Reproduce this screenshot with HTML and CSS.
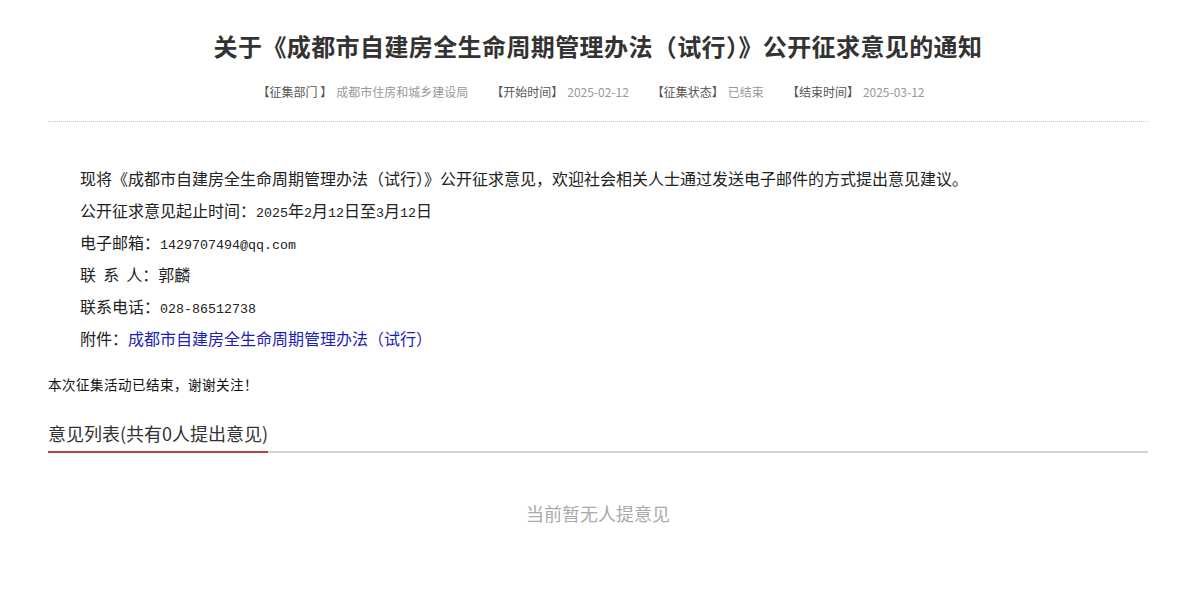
FILE: index.html
```html
<!DOCTYPE html>
<html lang="zh-CN">
<head>
	<meta charset="UTF-8">
	<title>意见征集</title>
	<link rel="stylesheet" href="styles.css">
</head>
<body>
	<div class="page">
		<h1 class="title">关于《成都市自建房全生命周期管理办法（试行）》公开征求意见的通知</h1>
		<div class="meta">
			<span class="item"><b>【征集部门 】</b>成都市住房和城乡建设局</span>
			<span class="item"><b>【开始时间】</b>2025-02-12</span>
			<span class="item"><b>【征集状态】</b>已结束</span>
			<span class="item"><b>【结束时间】</b>2025-03-12</span>
		</div>
		<div class="content">
			<p>现将《成都市自建房全生命周期管理办法（试行）》公开征求意见，欢迎社会相关人士通过发送电子邮件的方式提出意见建议。</p>
			<p>公开征求意见起止时间：<span class="en">2025</span>年<span class="en">2</span>月<span class="en">12</span>日至<span class="en">3</span>月<span class="en">12</span>日</p>
			<p>电子邮箱：<span class="en">1429707494@qq.com</span></p>
			<p>联&nbsp;&nbsp;系&nbsp;&nbsp;人：郭麟</p>
			<p>联系电话：<span class="en">028-86512738</span></p>
			<p>附件：<a href="#">成都市自建房全生命周期管理办法（试行）</a></p>
		</div>
		<div class="notice">本次征集活动已结束，谢谢关注！</div>
		<div class="tabs">
			<span class="tab">意见列表(共有0人提出意见)</span>
		</div>
		<div class="empty">当前暂无人提意见</div>
	</div>
</body>
</html>
```

FILE: styles.css
```css
*{margin: 0;padding: 0;}
body{background: #fff;font-family: "Noto Sans CJK SC", "Liberation Sans", sans-serif;color: #333;}
.page{width: 1100px;margin-left: 48px;}
.title{padding-top: 30px;font-size: 24px;line-height: 32px;font-weight: bold;text-align: center;color: #333;letter-spacing: 0.4px;}
.meta{display: flex;justify-content: center;gap: 23px;margin-top: 20px;padding-right: 14px;padding-bottom: 19px;line-height: 20px;font-size: 12px;color: #999;border-bottom: 1px dotted #c8c8c8;}
.meta b{font-weight: normal;color: #555;margin-right: 4px;}
.content{padding-top: 40px;}
.content p{font-size: 16px;line-height: 32px;height: 32px;text-indent: 2em;color: #222;}
.content .en{font-family: "Liberation Mono", monospace;font-size: 13.33px;line-height: 1;}
.content a{color: #1e1eb8;text-decoration: none;}
.notice{margin-top: 20px;font-size: 13.5px;line-height: 20px;color: #111;letter-spacing: 0.5px;}
.tabs{margin-top: 27px;border-bottom: 2px solid #d4d4d4;height: 30px;}
.tab{display: inline-block;font-size: 18px;line-height: 24px;padding-bottom: 6px;border-bottom: 2px solid #b84440;color: #333;}
.empty{margin-top: 48px;font-size: 18px;line-height: 24px;text-align: center;color: #aaa;}
```
